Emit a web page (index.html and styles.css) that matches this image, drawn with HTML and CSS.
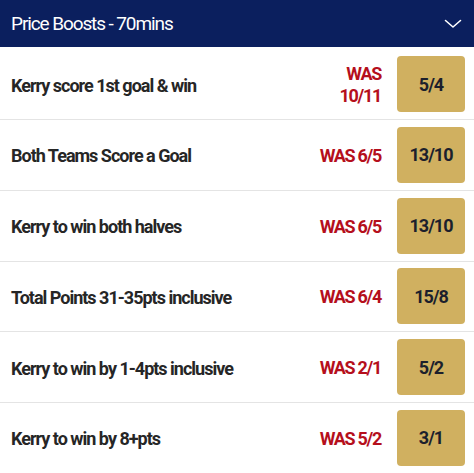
FILE: index.html
```html
<!DOCTYPE html>
<html>
<head>
<meta charset="utf-8">
<link rel="stylesheet" href="styles.css">
</head>
<body>
<div class="panel">
  <div class="header">
    <span class="title">Price Boosts - 70mins</span>
    <svg class="chev" width="18" height="10" viewBox="0 0 18 10"><path d="M1.5 1.5 L9 8 L16.5 1.5" fill="none" stroke="#fff" stroke-width="1.6" stroke-linecap="round" stroke-linejoin="round"/></svg>
  </div>
  <div class="list">
    <div class="row"><span class="sel">Kerry score 1st goal &amp; win</span><span class="was">WAS<br>10/11</span><span class="odds">5/4</span></div>
    <div class="row"><span class="sel">Both Teams Score a Goal</span><span class="was">WAS 6/5</span><span class="odds">13/10</span></div>
    <div class="row"><span class="sel">Kerry to win both halves</span><span class="was">WAS 6/5</span><span class="odds">13/10</span></div>
    <div class="row"><span class="sel">Total Points 31-35pts inclusive</span><span class="was">WAS 6/4</span><span class="odds">15/8</span></div>
    <div class="row"><span class="sel">Kerry to win by 1-4pts inclusive</span><span class="was">WAS 2/1</span><span class="odds">5/2</span></div>
    <div class="row"><span class="sel">Kerry to win by 8+pts</span><span class="was">WAS 5/2</span><span class="odds">3/1</span></div>
  </div>
</div>
</body>
</html>
```
FILE: styles.css
```css
* { box-sizing: border-box; }
html, body { margin: 0; padding: 0; background: #fff; }
body { font-family: Roboto, "Liberation Sans", sans-serif; }
.panel { width: 474px; }
.header {
  height: 47px;
  background: #0b1f5e;
  display: flex;
  align-items: center;
  justify-content: space-between;
  padding: 0 10px 0 11px;
}
.title { color: #fff; font-size: 19px; letter-spacing: -1.1px; }
.chev { margin-top: 1px; margin-right: 2px; }
.list { padding-top: 2.25px; }
.row {
  height: 70.75px;
  display: flex;
  align-items: center;
  padding: 0 9px 0 11px;
  border-bottom: 1px solid #e4e4e4;
}
.sel { flex: 1; font-weight: 700; font-size: 18px; color: #262626; letter-spacing: -1px; padding-top: 2px; }
.was { color: #b50f1c; font-weight: 700; font-size: 18px; text-align: right; line-height: 22px; letter-spacing: -1.3px; margin-right: 16px; padding-top: 2px; }
.odds {
  width: 68px; height: 56px;
  background: #d0b060;
  border-radius: 4px;
  display: flex; align-items: center; justify-content: center;
  font-weight: 700; font-size: 18px; color: #1c1f2c; letter-spacing: -1px;
}
```
